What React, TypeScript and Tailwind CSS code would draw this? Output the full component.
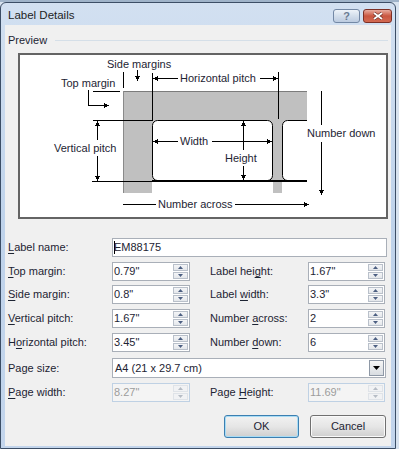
import React from 'react';

type Dir = 'l' | 'r' | 'u' | 'd';

const Arrow = ({ x, y, dir }: { x: number; y: number; dir: Dir }) => {
  const p =
    dir === 'r'
      ? `${x},${y} ${x - 5},${y - 2.5} ${x - 5},${y + 2.5}`
      : dir === 'l'
      ? `${x},${y} ${x + 5},${y - 2.5} ${x + 5},${y + 2.5}`
      : dir === 'd'
      ? `${x},${y} ${x - 2.5},${y - 5} ${x + 2.5},${y - 5}`
      : `${x},${y} ${x - 2.5},${y + 5} ${x + 2.5},${y + 5}`;
  return <polygon points={p} fill="#000" />;
};

const H = ({ x1, x2, y, w = 1 }: { x1: number; x2: number; y: number; w?: number }) => (
  <line x1={x1} x2={x2} y1={y} y2={y} stroke="#000" strokeWidth={w} />
);
const V = ({ y1, y2, x }: { y1: number; y2: number; x: number }) => (
  <line x1={x} x2={x} y1={y1} y2={y2} stroke="#000" strokeWidth={1} />
);

// preview drawing, coordinates are page pixels (box inner starts at 20,55)
function Diagram() {
  const txt = { fontFamily: 'Liberation Sans, Arial, sans-serif', fontSize: 11, fill: '#1d2433' };
  return (
    <svg width="366" height="162" className="block">
      <defs>
        <clipPath id="cut">
          <rect x="0" y="0" width="307" height="300" />
        </clipPath>
      </defs>
      <g transform="translate(-20,-55)" shapeRendering="crispEdges">
        {/* sheet */}
        <rect x="123" y="91" width="184" height="90" fill="#c0c0c0" />
        <rect x="123" y="181" width="29" height="12" fill="#c0c0c0" />
        <rect x="273" y="181" width="9" height="12" fill="#c0c0c0" />
        <line x1="123" x2="307" y1="91.5" y2="91.5" stroke="#7c7c7c" />
        <line x1="123.5" x2="123.5" y1="91" y2="193" stroke="#8a8a8a" />
        <g shapeRendering="auto">
          <rect x="152.5" y="120.5" width="120" height="60" rx="5" fill="#fff" stroke="#000" />
          <g clipPath="url(#cut)">
            <rect x="282.5" y="120.5" width="60" height="60" rx="5" fill="#fff" stroke="#000" />
          </g>
        </g>
        <H x1={152} x2={307} y={181} w={2} />
        <H x1={92} x2={152} y={181.5} />
        <H x1={93} x2={152} y={120.5} />

        {/* side margins */}
        <V x={123.5} y1={72} y2={88} />
        <V x={137.5} y1={70} y2={77} />
        <Arrow x={137.5} y={81} dir="d" />
        <text x="107" y="68" {...txt}>Side margins</text>

        {/* top margin */}
        <H x1={93} x2={120} y={91.5} />
        <V x={88.5} y1={90} y2={106} />
        <H x1={88} x2={104} y={105.5} />
        <Arrow x={109} y={105.5} dir="r" />
        <text x="61" y="87" {...txt}>Top margin</text>

        {/* horizontal pitch */}
        <V x={152.5} y1={73} y2={121} />
        <V x={278.5} y1={72} y2={119} />
        <H x1={156} x2={178} y={78.5} />
        <Arrow x={153} y={78.5} dir="l" />
        <text x="180" y="82" {...txt}>Horizontal pitch</text>
        <H x1={260} x2={274} y={78.5} />
        <Arrow x={278} y={78.5} dir="r" />

        {/* width */}
        <H x1={157} x2={178} y={141.5} />
        <Arrow x={153} y={141.5} dir="l" />
        <text x="180" y="145" {...txt}>Width</text>
        <H x1={212} x2={268} y={141.5} />
        <Arrow x={272} y={141.5} dir="r" />

        {/* height */}
        <Arrow x={243.5} y={121} dir="u" />
        <V x={243.5} y1={125} y2={150} />
        <text x="225" y="162" {...txt}>Height</text>
        <V x={243.5} y1={166} y2={176} />
        <Arrow x={243.5} y={180} dir="d" />

        {/* vertical pitch */}
        <Arrow x={97.5} y={121} dir="u" />
        <V x={97.5} y1={125} y2={140} />
        <text x="54" y="152" {...txt}>Vertical pitch</text>
        <V x={97.5} y1={156} y2={177} />
        <Arrow x={97.5} y={181} dir="d" />

        {/* number down */}
        <V x={321.5} y1={91} y2={125} />
        <text x="307" y="137" {...txt}>Number down</text>
        <V x={321.5} y1={142} y2={191} />
        <Arrow x={321.5} y={195} dir="d" />

        {/* number across */}
        <H x1={123} x2={156} y={204.5} />
        <text x="158" y="208" {...txt}>Number across</text>
        <H x1={235} x2={305} y={204.5} />
        <Arrow x={309} y={204.5} dir="r" />
      </g>
    </svg>
  );
}

const Acc = ({ text, at }: { text: string; at: number }) => (
  <span>
    {text.slice(0, at)}
    <span className="underline underline-offset-[2px]">{text[at]}</span>
    {text.slice(at + 1)}
  </span>
);

function Tri({ up, disabled }: { up?: boolean; disabled?: boolean }) {
  return (
    <div
      className={`flex flex-1 items-center justify-center border ${
        disabled ? 'border-[#dfe3e8] bg-[#f1f2f4]' : 'border-[#b9c0ca] bg-gradient-to-b from-[#f4f5f7] to-[#e4e7eb]'
      }`}
    >
      <svg width="5" height="3" className="block">
        <path d={up ? 'M0 3L2.5 0L5 3Z' : 'M0 0H5L2.5 3Z'} fill={disabled ? '#b6bcc5' : '#4c5f82'} />
      </svg>
    </div>
  );
}

function Spin({ value, w, disabled }: { value: string; w: string; disabled?: boolean }) {
  return (
    <div
      className={`flex h-[19px] ${w} border ${
        disabled ? 'border-[#bfd1e4] bg-[#f4f4f4] text-[#9c9c9c]' : 'border-[#a9afb8] bg-white text-[#1d2433]'
      }`}
    >
      <div className="flex-1 pl-[1px] leading-[17px]">{value}</div>
      <div className="flex w-[17px] flex-col gap-[1px] p-[1px]">
        <Tri up disabled={disabled} />
        <Tri disabled={disabled} />
      </div>
    </div>
  );
}

export default function App() {
  return (
    <div className="relative h-[449px] w-[399px] overflow-hidden bg-[#d8e3ef] font-['Liberation_Sans',Arial,sans-serif] text-[11px] text-[#1d2433]">
      <div className="h-[2px] w-full bg-[#9fb3c9]" />
      <div className="flex h-[447px] w-[396px] flex-col rounded-t-[6px] border border-[#3c4e66] bg-gradient-to-b from-[#d2e0f1] via-[#bfd3eb] to-[#c3d5ec] px-[4px] pb-[2px]">
        {/* title bar */}
        <div className="flex h-[22px] shrink-0 items-start justify-between">
          <div className="pl-[3px] pt-[4px] text-[11.5px] leading-[16px] text-[#1e1e1e]">Label Details</div>
          <div className="mr-[-1px] mt-[6px] flex gap-[3px]">
            <div className="flex h-[14px] w-[27px] items-center justify-center rounded-[3px] border border-[#7388a5] bg-gradient-to-b from-[#eef3f9] via-[#d3deeb] to-[#bccbe0] text-[11px] font-bold leading-none text-[#6a7b92]">
              ?
            </div>
            <div className="flex h-[14px] w-[29px] items-center justify-center rounded-[3px] border border-[#7c2f25] bg-gradient-to-b from-[#e7ab9f] via-[#c9553f] to-[#d36a52]">
              <svg width="10" height="8" className="block">
                <path d="M1 1L9 7M9 1L1 7" stroke="#5a1f18" strokeWidth="3" />
                <path d="M1 1L9 7M9 1L1 7" stroke="#fff" strokeWidth="2" />
              </svg>
            </div>
          </div>
        </div>

        {/* client */}
        <div className="flex flex-1 flex-col bg-[#f0f0f0] pl-[3px]">
          <div className="mt-[8px] flex items-center">
            <span className="leading-[14px]">Preview</span>
            <div className="ml-[8px] mr-[3px] h-[1px] flex-1 bg-[#d5dfe8]" />
          </div>

          <div className="ml-[10px] mt-[6px] h-[166px] w-[370px] border-2 border-[#646464] bg-white">
            <Diagram />
          </div>

          <div className="mt-[19px] flex h-[19px] items-center">
            <div className="w-[104px]">
              <Acc text="Label name:" at={0} />
            </div>
            <div className="flex h-[19px] w-[275px] items-center border border-[#a9afb8] bg-white pl-[1px]">
              <span className="mr-[-1px] h-[13px] w-[1px] bg-black" />
              <span>EM88175</span>
            </div>
          </div>

          <div className="mt-[5px] flex h-[19px] items-center">
            <div className="w-[104px]"><Acc text="Top margin:" at={0} /></div>
            <Spin value={'0.79"'} w="w-[78px]" />
            <div className="ml-[20px] w-[98px]"><Acc text="Label height:" at={9} /></div>
            <Spin value={'1.67"'} w="w-[77px]" />
          </div>

          <div className="mt-[4px] flex h-[19px] items-center">
            <div className="w-[104px]"><Acc text="Side margin:" at={0} /></div>
            <Spin value={'0.8"'} w="w-[78px]" />
            <div className="ml-[20px] w-[98px]"><Acc text="Label width:" at={6} /></div>
            <Spin value={'3.3"'} w="w-[77px]" />
          </div>

          <div className="mt-[5px] flex h-[19px] items-center">
            <div className="w-[104px]"><Acc text="Vertical pitch:" at={0} /></div>
            <Spin value={'1.67"'} w="w-[78px]" />
            <div className="ml-[20px] w-[98px]"><Acc text="Number across:" at={7} /></div>
            <Spin value="2" w="w-[77px]" />
          </div>

          <div className="mt-[5px] flex h-[19px] items-center">
            <div className="w-[104px]"><Acc text="Horizontal pitch:" at={1} /></div>
            <Spin value={'3.45"'} w="w-[78px]" />
            <div className="ml-[20px] w-[98px]"><Acc text="Number down:" at={7} /></div>
            <Spin value="6" w="w-[77px]" />
          </div>

          <div className="mt-[6px] flex h-[20px] items-center">
            <div className="w-[104px]">Page size:</div>
            <div className="flex h-[20px] w-[274px] border border-[#a9afb8] bg-white">
              <div className="flex-1 pl-[2px] leading-[18px]">A4 (21 x 29.7 cm)</div>
              <div className="m-[1px] flex w-[15px] items-center justify-center border border-[#8e98a6] bg-gradient-to-b from-[#f6f6f6] to-[#d8dce1]">
                <svg width="7" height="4" className="block">
                  <path d="M0 0H7L3.5 4Z" fill="#000" />
                </svg>
              </div>
            </div>
          </div>

          <div className="mt-[5px] flex h-[19px] items-center">
            <div className="w-[104px]"><Acc text="Page width:" at={0} /></div>
            <Spin value={'8.27"'} w="w-[78px]" disabled />
            <div className="ml-[20px] w-[98px]"><Acc text="Page Height:" at={5} /></div>
            <Spin value={'11.69"'} w="w-[77px]" disabled />
          </div>

          <div className="ml-[216px] mt-[13px] flex gap-[11px]">
            <button className="h-[23px] w-[75px] rounded-[3px] border border-[#3c7fb1] bg-gradient-to-b from-[#f2f2f2] via-[#e6e6e6] to-[#cfcfcf] shadow-[inset_0_0_0_1px_#a8dcf5] text-[#1d2433]">
              OK
            </button>
            <button className="h-[23px] w-[76px] rounded-[3px] border border-[#707070] bg-gradient-to-b from-[#f2f2f2] via-[#e6e6e6] to-[#cfcfcf] shadow-[inset_0_0_0_1px_#fafafa] text-[#1d2433]">
              Cancel
            </button>
          </div>
        </div>
      </div>
    </div>
  );
}
